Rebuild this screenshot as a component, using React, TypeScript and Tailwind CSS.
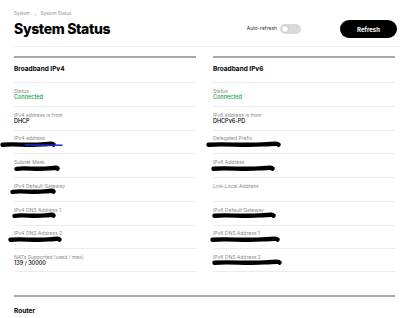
import { ChevronRight } from 'lucide-react';

interface Scribble {
  offset: number;
  width: number;
  blue?: boolean;
}

interface Row {
  label: string;
  value?: string;
  green?: boolean;
  scribble?: Scribble;
}

const ipv4Rows: Row[] = [
  { label: 'Status', value: 'Connected', green: true },
  { label: 'IPv4 address is from', value: 'DHCP' },
  { label: 'IPv4 address', scribble: { offset: -14, width: 56, blue: true } },
  { label: 'Subnet Mask', scribble: { offset: 0, width: 46 } },
  { label: 'IPv4 Default Gateway', scribble: { offset: -4, width: 46 } },
  { label: 'IPv4 DNS Address 1', scribble: { offset: -2, width: 44 } },
  { label: 'IPv4 DNS Address 2', scribble: { offset: -6, width: 54 } },
  { label: 'NATs Supported (used / max)', value: '139 / 30000' },
];

const ipv6Rows: Row[] = [
  { label: 'Status', value: 'Connected', green: true },
  { label: 'IPv6 address is from', value: 'DHCPv6-PD' },
  { label: 'Delegated Prefix', scribble: { offset: -7, width: 75 } },
  { label: 'IPv6 Address', scribble: { offset: -2, width: 64 } },
  { label: 'Link-Local Address' },
  { label: 'IPv6 Default Gateway', scribble: { offset: -1, width: 64 } },
  { label: 'IPv6 DNS Address 1', scribble: { offset: -3, width: 70 } },
  { label: 'IPv6 DNS Address 2', scribble: { offset: -1, width: 70 } },
];

const Redaction = ({ offset, width, blue }: Scribble) => (
  <svg
    width={width + (blue ? 8 : 0)}
    height="7"
    viewBox={`0 0 ${width + (blue ? 8 : 0)} 7`}
    style={{ marginLeft: offset }}
    className="block -mt-[1px]"
  >
    <path
      d={`M2.5 3.8 C ${width * 0.25} 2.4, ${width * 0.5} 4.8, ${width * 0.75} 3.4 S ${width - 4} 3, ${width - 2.5} 3.6`}
      stroke="#000"
      strokeWidth="4.4"
      strokeLinecap="round"
      fill="none"
    />
    {blue && (
      <path
        d={`M${width * 0.45} 4 L ${width + 6} 4.2`}
        stroke="#1d2bd8"
        strokeWidth="1.5"
        strokeLinecap="round"
        fill="none"
      />
    )}
  </svg>
);

const StatusColumn = ({ title, rows }: { title: string; rows: Row[] }) => (
  <div className="border-t-2 border-[#a9a9a9]">
    <div className="h-[24px] flex items-center text-[6.5px] font-bold text-black">
      {title}
    </div>
    {rows.map((row, i) => (
      <div
        key={row.label}
        className={`h-[23.75px] flex flex-col justify-center border-t border-[#ececec] ${
          i === rows.length - 1 ? 'border-b' : ''
        }`}
      >
        <span className="text-[5px] leading-[6px] text-[#8a8a8a]">{row.label}</span>
        <div className="h-[7px] flex items-center">
          {row.value && (
            <span
              className={`text-[5.5px] leading-[7px] font-medium ${
                row.green ? 'text-[#00a642]' : 'text-black'
              }`}
            >
              {row.value}
            </span>
          )}
          {row.scribble && <Redaction {...row.scribble} />}
        </div>
      </div>
    ))}
  </div>
);

const App = () => {
  return (
    <div className="w-[400px] h-[318px] overflow-hidden bg-white font-['Inter',sans-serif]">
      <div className="ml-[11px] pl-[3px] pr-[3px] pt-[9px] pb-[7px] border-b border-[#efefef]">
        <div className="h-[10px] flex items-center gap-[3px] text-[4.5px] text-[#8a8a8a]">
          <span>System</span>
          <ChevronRight className="w-[5px] h-[5px]" strokeWidth={2} />
          <span>System Status</span>
        </div>
        <div className="h-[20px] flex items-center justify-between">
          <h1 className="text-[14px] font-extrabold tracking-tight text-black leading-none">
            System Status
          </h1>
          <div className="flex items-center">
            <span className="text-[5px] text-[#333]">Auto-refresh</span>
            <div className="ml-[3px] w-[21px] h-[10px] rounded-full bg-[#d8dada] flex items-center p-[1px]">
              <div className="w-[8px] h-[8px] rounded-full bg-white border border-[#c8c8c8]" />
            </div>
            <button className="ml-[39px] w-[57px] h-[18px] rounded-full bg-black text-white text-[6px] font-bold">
              Refresh
            </button>
          </div>
        </div>
      </div>

      <div className="grid grid-cols-2 gap-[17px] pl-[14px] pr-[5px] mt-[9px]">
        <StatusColumn title="Broadband IPv4" rows={ipv4Rows} />
        <StatusColumn title="Broadband IPv6" rows={ipv6Rows} />
      </div>

      <div className="ml-[14px] mr-[5px] mt-[23px] border-t-2 border-[#a9a9a9] pt-[10px]">
        <h2 className="text-[6.5px] font-bold text-black">Router</h2>
      </div>
    </div>
  );
};

export default App;
